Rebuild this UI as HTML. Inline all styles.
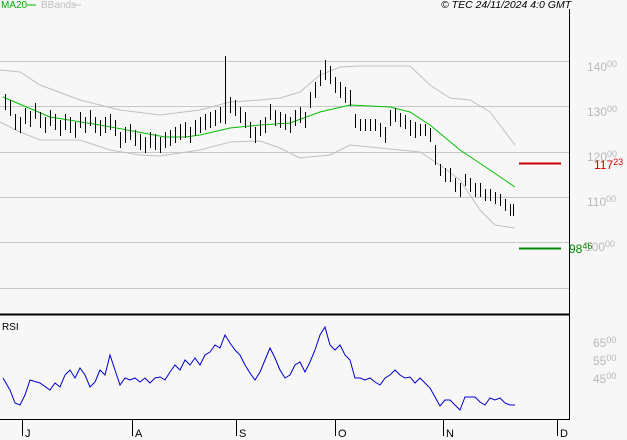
<!DOCTYPE html><html><head><style>
body{margin:0;background:#f7f7f7;}
svg{display:block;font-family:"Liberation Sans",sans-serif;}
</style></head><body>
<svg width="627" height="440" xmlns="http://www.w3.org/2000/svg">
<rect width="627" height="440" fill="#f7f7f7"/>
<g stroke="#c8c8c8" stroke-width="1">
<line x1="0" y1="61.5" x2="569" y2="61.5"/><line x1="0" y1="106.5" x2="569" y2="106.5"/><line x1="0" y1="152.5" x2="569" y2="152.5"/><line x1="0" y1="197.5" x2="569" y2="197.5"/><line x1="0" y1="242.5" x2="569" y2="242.5"/><line x1="0" y1="288.5" x2="569" y2="288.5"/>
</g>
<line x1="569.5" y1="9" x2="569.5" y2="419" stroke="#000"/>
<line x1="0" y1="314.5" x2="570" y2="314.5" stroke="#000" stroke-width="2"/>
<line x1="0" y1="419.5" x2="570" y2="419.5" stroke="#000"/>
<g stroke="#000"><line x1="22.5" y1="419" x2="22.5" y2="436"/><line x1="132.5" y1="419" x2="132.5" y2="436"/><line x1="236.5" y1="419" x2="236.5" y2="436"/><line x1="335.5" y1="419" x2="335.5" y2="436"/><line x1="443.5" y1="419" x2="443.5" y2="436"/><line x1="557.5" y1="419" x2="557.5" y2="436"/></g>
<g font-size="11" fill="#000"><text x="25" y="437">J</text><text x="135" y="437">A</text><text x="239" y="437">S</text><text x="338" y="437">O</text><text x="446" y="437">N</text><text x="560" y="437">D</text></g>
<polyline fill="none" stroke="#c0c0c0" points="0,70 20,72 40,85 80,100 120,110 160,115 200,110 230,102 260,100 280,98 300,92 320,75 340,67 360,66 410,66 430,85 450,98 470,100 490,112 515,145"/>
<polyline fill="none" stroke="#c0c0c0" points="0,122 20,132 40,140 80,140 110,150 140,155 160,156 200,150 230,142 260,141 280,148 300,158 330,155 350,145 380,148 420,152 440,165 460,180 480,210 495,225 515,228"/>
<polyline fill="none" stroke="#00c000" points="3,97 50,117 100,125 165,137 185,137 200,135 230,128 260,125 290,123 320,112 350,105 390,107 410,112 430,125 460,150 490,170 515,187"/>
<line x1="519" y1="163.5" x2="561" y2="163.5" stroke="#cc0000" stroke-width="2"/>
<line x1="519" y1="248.5" x2="561" y2="248.5" stroke="#008800" stroke-width="2"/>
<g fill="#b8b8b8" font-size="12">
<text x="587" y="71">140<tspan font-size="9" dy="-4">00</tspan></text>
<text x="587" y="116">130<tspan font-size="9" dy="-4">00</tspan></text>
<text x="587" y="161">120<tspan font-size="9" dy="-4">00</tspan></text>
<text x="587" y="206">110<tspan font-size="9" dy="-4">00</tspan></text>
<text x="585" y="251">100<tspan font-size="9" dy="-4">00</tspan></text>
<text x="593" y="347">65<tspan font-size="9" dy="-4">00</tspan></text>
<text x="593" y="365">55<tspan font-size="9" dy="-4">00</tspan></text>
<text x="593" y="383">45<tspan font-size="9" dy="-4">00</tspan></text>
</g>
<text x="594" y="169" fill="#cc0000" font-size="12">117<tspan font-size="9" dy="-4">23</tspan></text>
<text x="569" y="253" fill="#008800" font-size="12">98<tspan font-size="9" dy="-4">46</tspan></text>
<text x="1" y="8" font-size="10" fill="#00b000">MA20</text><line x1="27" y1="5" x2="36" y2="5" stroke="#00b000"/>
<text x="41" y="8" font-size="10" fill="#c0c0c0">BBands</text><line x1="72" y1="5" x2="81" y2="5" stroke="#c0c0c0"/>
<text x="441" y="8" font-size="10.5" font-style="italic" fill="#000">© TEC 24/11/2024 4:0 GMT</text>
<text x="2" y="330" font-size="10" fill="#000">RSI</text>
<polyline fill="none" stroke="#0000cc" points="3,378 10,390 15,403 20,405 25,395 30,380 40,383 50,390 55,383 60,387 65,375 70,370 75,378 80,368 85,375 90,387 95,382 100,370 105,375 110,355 115,370 120,385 125,378 130,380 135,378 140,382 145,378 150,383 155,378 160,377 165,380 170,372 175,365 180,370 185,360 190,365 195,358 200,365 205,355 210,352 215,345 220,348 225,335 230,343 235,350 240,355 245,365 250,373 255,380 260,372 265,360 270,348 275,358 280,370 285,378 290,375 295,365 300,362 305,372 310,362 315,350 320,335 325,327 330,345 335,350 340,345 345,355 350,360 355,378 360,378 365,380 370,378 375,382 380,385 385,378 390,375 395,370 400,375 405,378 410,377 415,383 420,378 425,383 430,388 435,397 440,406 445,400 450,400 455,405 460,410 465,397 470,397 475,397 480,402 485,405 490,398 495,400 500,398 505,403 510,405 515,405"/>
<g stroke="#000" stroke-width="1">
<path d="M5.5,94V110M10.5,100V116M15.5,114V130M20.5,117V133M25.5,108V124M30.5,111V127M35.5,103V119M40.5,112V128M45.5,117V133M50.5,110V126M55.5,114V130M60.5,120V136M65.5,114V130M70.5,117V133M75.5,122V138M80.5,112V128M85.5,117V133M90.5,110V126M95.5,117V133M100.5,120V136M105.5,117V133M110.5,114V130M115.5,120V136M120.5,132V148M125.5,127V143M130.5,124V140M135.5,130V146M140.5,134V150M145.5,137V153M150.5,132V148M155.5,134V150M160.5,137V153M165.5,132V148M170.5,130V146M175.5,127V143M180.5,124V140M185.5,122V138M190.5,127V143M195.5,120V136M200.5,117V133M205.5,114V130M210.5,112V128M215.5,110V126M220.5,107V123M225.5,56V124M230.5,97V113M235.5,100V116M240.5,107V123M245.5,112V128M250.5,122V138M255.5,127V143M260.5,120V136M265.5,117V133M270.5,104V120M275.5,110V126M280.5,112V128M285.5,114V130M290.5,117V133M295.5,110V126M300.5,107V123M305.5,112V128M310.5,92V108M315.5,82V98M320.5,70V86M325.5,60V80M330.5,66V84M335.5,77V93M340.5,82V98M345.5,87V103M350.5,90V106M355.5,114V128M360.5,119V131M365.5,119V131M370.5,119V131M375.5,119V131M380.5,123V137M385.5,127V143M390.5,110V126M395.5,108V122M400.5,113V127M405.5,115V129M410.5,120V136M415.5,122V138M420.5,124V136M425.5,124V136M430.5,128V142M435.5,145V165M440.5,164V176M445.5,168V182M450.5,168V182M455.5,178V192M460.5,183V197M465.5,174V186M470.5,178V192M475.5,183V197M480.5,183V197M485.5,189V201M490.5,189V201M495.5,192V204M500.5,194V206M505.5,199V211M510.5,204V216M513.5,204V216"/>
</g>
</svg>
</body></html>
